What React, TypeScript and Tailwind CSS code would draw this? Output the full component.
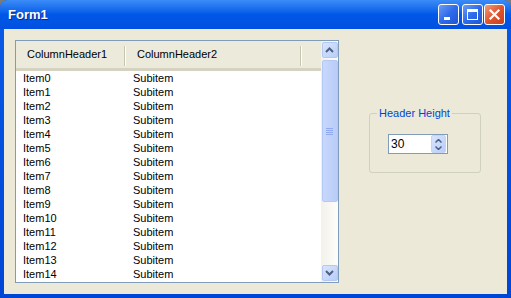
import React from 'react';

const font = { fontFamily: '"Liberation Sans", Arial, sans-serif' };

const items = Array.from({ length: 15 }, (_, i) => `Item${i}`);

function CaptionButton({ kind }: { kind: 'min' | 'max' | 'close' }) {
  const base =
    kind === 'close'
      ? 'bg-gradient-to-br from-[#f09a7c] via-[#e0552f] to-[#c8401c]'
      : 'bg-gradient-to-br from-[#6c9cf6] via-[#2d6bea] to-[#1f55d6]';
  return (
    <div className={`w-[21px] h-[21px] rounded-[3px] border border-white flex items-center justify-center ${base}`}>
      {kind === 'min' && (
        <svg width="13" height="13" viewBox="0 0 13 13">
          <rect x="2" y="9" width="6" height="3" fill="white" />
        </svg>
      )}
      {kind === 'max' && (
        <svg width="13" height="13" viewBox="0 0 13 13">
          <rect x="1.5" y="1.5" width="10" height="10" fill="none" stroke="white" strokeWidth="1" />
          <rect x="1" y="1" width="11" height="3" fill="white" />
        </svg>
      )}
      {kind === 'close' && (
        <svg width="13" height="13" viewBox="0 0 13 13">
          <path d="M2.5 2.5 L10.5 10.5 M10.5 2.5 L2.5 10.5" stroke="white" strokeWidth="2.2" strokeLinecap="square" />
        </svg>
      )}
    </div>
  );
}

function ScrollArrow({ up }: { up?: boolean }) {
  return (
    <div className="w-[16px] h-[16px] mx-auto rounded-[2px] border border-[#b4c8f6] bg-gradient-to-br from-[#d9e5fd] to-[#b9cdf8] flex items-center justify-center">
      <svg width="9" height="6" viewBox="0 0 9 6">
        <path
          d={up ? 'M1 5 L4.5 1.5 L8 5' : 'M1 1 L4.5 4.5 L8 1'}
          fill="none"
          stroke="#4d6185"
          strokeWidth="2"
        />
      </svg>
    </div>
  );
}

function ListView() {
  return (
    <div className="ml-[11px] mt-[11px] w-[324px] h-[243px] border border-[#7f9db9] bg-white flex">
      <div className="flex-1 flex flex-col overflow-hidden">
        <div className="h-[30px] shrink-0 flex bg-[#ebeadb] border-b-[3px] border-[#d6d2c2] text-[11px] text-black">
          <div className="w-[110px] pl-[11px] flex items-center relative">
            ColumnHeader1
            <span className="absolute right-0 top-[5px] bottom-[2px] w-[2px] border-l border-[#c7c5b2] bg-white" />
          </div>
          <div className="w-[176px] pl-[11px] flex items-center relative">
            ColumnHeader2
            <span className="absolute right-0 top-[5px] bottom-[2px] w-[2px] border-l border-[#c7c5b2] bg-white" />
          </div>
        </div>
        <div className="text-[11px] text-black">
          {items.map((item) => (
            <div key={item} className="flex h-[14px] leading-[14px]">
              <div className="w-[110px] pl-[7px]">{item}</div>
              <div className="pl-[7px]">Subitem</div>
            </div>
          ))}
        </div>
      </div>
      <div className="w-[17px] shrink-0 bg-gradient-to-r from-[#f3f1ea] to-[#fdfdfa] flex flex-col py-[1px]">
        <ScrollArrow up />
        <div className="mx-auto mt-[2px] w-[16px] h-[142px] rounded-[2px] border border-[#b4c8f6] bg-gradient-to-r from-[#c8d7fc] to-[#b9cdf8] flex flex-col items-center justify-center gap-[1px]">
          {[0, 1, 2, 3].map((i) => (
            <span key={i} className="w-[7px] h-[1px] bg-[#8faaf0]" />
          ))}
        </div>
        <div className="flex-1" />
        <ScrollArrow />
      </div>
    </div>
  );
}

function HeaderGroup() {
  return (
    <div className="ml-[30px] mt-[84px] w-[112px] h-[60px] border border-[#d0d0bf] rounded-[3px] relative">
      <span className="absolute -top-[8px] left-[7px] px-[2px] bg-[#ece9d8] text-[11px] text-[#0046d5] leading-[14px]">
        Header Height
      </span>
      <div className="ml-[18px] mt-[20px] w-[60px] h-[20px] border border-[#7f9db9] bg-white flex items-center">
        <span className="flex-1 pl-[2px] text-[12px] text-black">30</span>
        <div className="w-[15px] h-[18px] rounded-[2px] bg-gradient-to-br from-[#d9e5fd] to-[#b9cdf8] border border-[#c4d4f8] flex flex-col items-center justify-center gap-[3px] mr-[1px]">
          <svg width="7" height="4" viewBox="0 0 7 4">
            <path d="M0.5 3.5 L3.5 0.5 L6.5 3.5" fill="none" stroke="#4d6185" strokeWidth="1.5" />
          </svg>
          <svg width="7" height="4" viewBox="0 0 7 4">
            <path d="M0.5 0.5 L3.5 3.5 L6.5 0.5" fill="none" stroke="#4d6185" strokeWidth="1.5" />
          </svg>
        </div>
      </div>
    </div>
  );
}

export default function App() {
  return (
    <div className="w-[511px] h-[298px] bg-[#7b7b7b]" style={font}>
      <div className="w-full h-full flex flex-col rounded-t-[8px] overflow-hidden bg-gradient-to-b from-[#0a5ae8] to-[#0046d6]">
        <div className="h-[29px] shrink-0 flex items-center pl-[8px] pr-[6px] bg-gradient-to-b from-[#3b8cf7] via-[#0058e8] to-[#0150e0]">
          <span className="text-white font-bold text-[13px] [text-shadow:1px_1px_0_#0a2a8a]">Form1</span>
          <div className="ml-auto flex gap-[1px] items-center">
            <CaptionButton kind="min" />
            <div className="w-[1px]" />
            <CaptionButton kind="max" />
            <CaptionButton kind="close" />
          </div>
        </div>
        <div className="flex-1 mx-[4px] mb-[4px] bg-[#ece9d8] flex items-start">
          <ListView />
          <HeaderGroup />
        </div>
      </div>
    </div>
  );
}
